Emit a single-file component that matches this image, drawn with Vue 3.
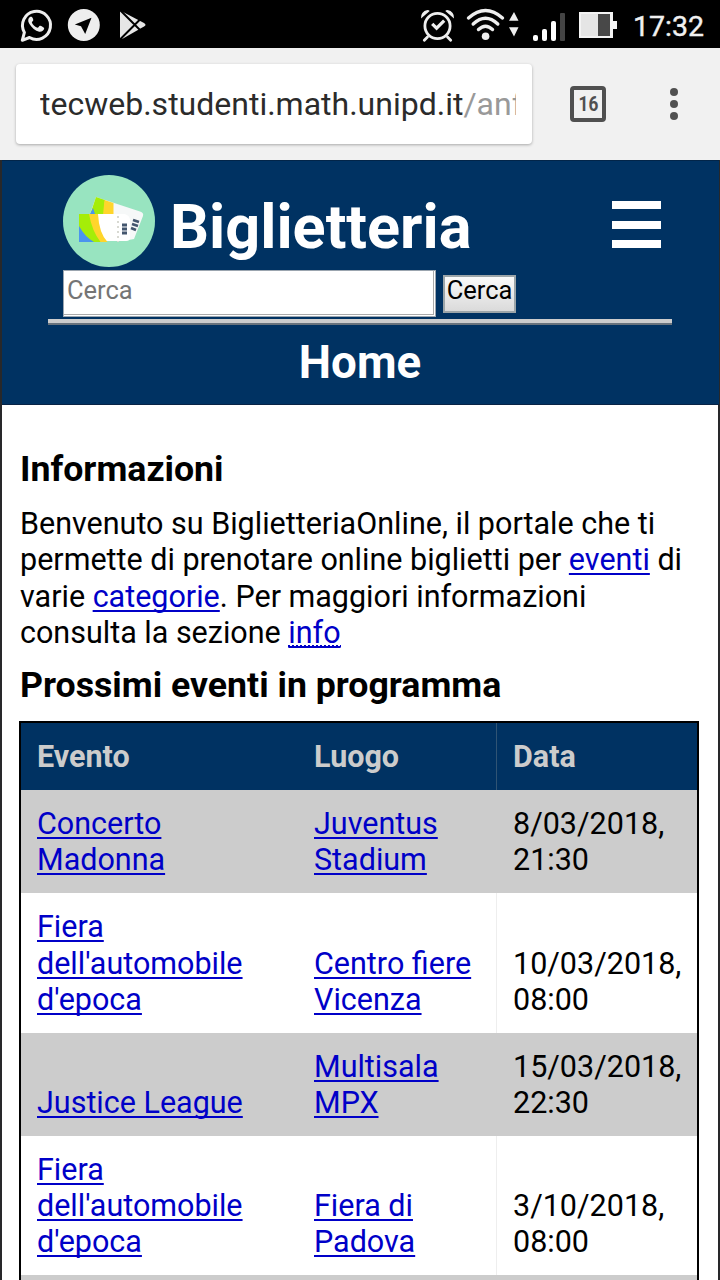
<script setup>
const events = [
  { name: ['Concerto', 'Madonna'], place: ['Juventus', 'Stadium'], date: ['8/03/2018,', '21:30'] },
  { name: ['Fiera', "dell'automobile", "d'epoca"], place: ['Centro fiere', 'Vicenza'], date: ['10/03/2018,', '08:00'] },
  { name: ['Justice League'], place: ['Multisala', 'MPX'], date: ['15/03/2018,', '22:30'] },
  { name: ['Fiera', "dell'automobile", "d'epoca"], place: ['Fiera di', 'Padova'], date: ['3/10/2018,', '08:00'] },
]
</script>

<template>
  <div class="screen">
    <div class="status">
      <svg class="status-icons" width="160" height="48" viewBox="0 0 160 48">
        <path d="M22.300 40.300 L24.400 32.400 A14 14 0 1 1 29.500 37.500 Z" fill="none" stroke="#eee" stroke-width="3" stroke-linejoin="round" />
        <path d="M30.300 16.700 c-2.400 1.400 -2.700 4.300 -1 7 c2.400 4 6 7 9.900 8 c2.400 .4 4.700 -1.300 5 -3.500 c0 -.8 -3.700 -2.800 -4.500 -2.500 c-.8 .5 -1.200 2 -2.200 2 c-2.200 -.5 -4.800 -3 -5.700 -5.200 c0 -1 1.500 -1.700 1.500 -2.600 c-.2 -1.300 -1 -3 -1.700 -3.200 Z" fill="#eee" />
        <circle cx="83.800" cy="25" r="16" fill="#eee" />
        <path d="M91.500 17.700 L74.800 24.600 L81 26.200 L85.200 34 Z" fill="#000" />
        <path d="M120 11 L123 12 L144 23 Q147 24.800 144 26.600 L123 38.500 L120 39 Z" fill="#e6e6e6" />
        <path d="M120 10 L141 31 M120 39.500 L141 18.500" stroke="#000" stroke-width="2" />
      </svg>
      <svg class="status-icons" width="210" height="48" viewBox="420 0 210 48">
        <g fill="none" stroke="#eee" stroke-width="2.800" stroke-linecap="round">
          <circle cx="437.500" cy="26" r="12.600" />
          <path d="M427.500 37 l-3.200 3.300 M447.500 37 l3.200 3.300" />
          <path d="M432.200 23.800 l4.400 4.400 l7.600 -7.600" stroke-width="3.200" stroke-linecap="butt" />
        </g>
        <path d="M421 18.500 q-.5 -7 6.500 -8.500 q1.500 0 2.200 1 Z M454 18.500 q.5 -7 -6.500 -8.500 q-1.500 0 -2.200 1 Z" fill="#eee" />
        <g fill="none" stroke="#eee" stroke-width="3.400" stroke-linecap="round">
          <path d="M468.500 18 Q485.500 3 502.500 18" />
          <path d="M473.200 24 Q485.500 12.500 497.800 24" />
          <path d="M478.500 29.500 Q485.500 23 492.500 29.500" />
        </g>
        <circle cx="485.600" cy="36.300" r="3.800" fill="#eee" />
        <path d="M509 20.800 L514 12 L518.500 20.800 Z M509 27.300 L514 36.500 L518.500 27.300 Z" fill="#eee" />
        <rect x="533" y="35" width="5" height="6" rx="2" fill="#fff" />
        <rect x="542" y="29" width="5" height="12" rx="2" fill="#fff" />
        <rect x="551" y="21" width="5" height="20" rx="2" fill="#fff" />
        <rect x="560" y="13" width="5" height="28" rx="1" fill="#444" />
        <path d="M579 12 h34 v9 h4 v8 h-4 v9 h-34 Z" fill="#f4f4f4" />
        <rect x="581" y="14" width="17" height="22" fill="#e5e5e5" />
        <rect x="598" y="14" width="12" height="22" fill="#484848" />
      </svg>
      <span class="clock">17:32</span>
    </div>

    <div class="toolbar">
      <div class="address"><div class="url">tecweb.studenti.math.unipd.it<span>/anf</span></div></div>
      <div class="tabs"><span>16</span></div>
      <div class="dots"><i></i><i></i><i></i></div>
    </div>

    <div class="page">
      <header>
        <div class="top">
          <div class="brand-row">
            <svg class="logo" width="92" height="92" viewBox="0 0 92 92">
              <circle cx="46" cy="46" r="46" fill="#98e4c0" />
              <path d="M33 22 L77 36.500 Q81 37.500 80 41 L71 64 L60 66 L27 39 Z" fill="#f6f8f8" />
              <path d="M33 22 L42 25 L41 40 H27 Z" fill="#a5ed08" />
              <path d="M41.500 25 L50.500 28 V40 H40 Z" fill="#ffd52b" />
              <path d="M30 33 L32 39 H27 Z" fill="#4b94ee" />
              <path d="M16 39 H62 Q67 41 67 45 V63 Q67 66 63 66 H16 Z" fill="#fff" />
              <path d="M16 39 H28 Q30 57 42 67 H16 Z" fill="#a5ed08" />
              <path d="M26 39 H35 Q36 58 44.500 67 H37.500 Q29 56 26 39 Z" fill="#ffd52b" />
              <path d="M16 51 Q22 62 31 67 H16 Z" fill="#4b94ee" />
              <path d="M55 41 V67" stroke="#d8d9d2" stroke-width="2" stroke-dasharray="2 3" />
              <path d="M59 49 h5 M59 53 h5 M59 57 h5" stroke="#44566e" stroke-width="2.800" transform="translate(0 1)" />
              <path d="M70 45 l6 2 M69 49 l6 2 M68 53 l5 2" stroke="#44566e" stroke-width="2.800" />
            </svg>
            <h1>Biglietteria</h1>
            <div class="burger"><i></i><i></i><i></i></div>
          </div>
          <div class="search">
            <div class="field">Cerca</div>
            <div class="button">Cerca</div>
          </div>
        </div>
        <h2>Home</h2>
      </header>

      <main>
        <h3>Informazioni</h3>
        <p>
          Benvenuto su BiglietteriaOnline, il portale che ti<br />permette di prenotare online biglietti per <a>eventi</a> di<br />varie <a>categorie</a>. Per maggiori informazioni<br />consulta la sezione <a class="abbr">info</a>
        </p>
        <h3 class="next">Prossimi eventi in programma</h3>
        <div class="table">
          <div class="row head"><div>Evento</div><div>Luogo</div><div>Data</div></div>
          <div v-for="(e, i) in events" :key="i" class="row">
            <div><a v-for="t in e.name" :key="t">{{ t }}</a></div>
            <div><a v-for="t in e.place" :key="t">{{ t }}</a></div>
            <div><span v-for="t in e.date" :key="t">{{ t }}</span></div>
          </div>
          <div class="row filler"></div>
        </div>
      </main>
    </div>
  </div>
</template>

<style>
body { overflow: hidden; background: #fff; }
</style>

<style scoped>
* { box-sizing: border-box; }
.screen { width: 720px; height: 1280px; overflow: hidden; font-family: Roboto, "Liberation Sans", sans-serif; color: #000; display: flex; flex-direction: column; }
.status { height: 48px; background: #000; display: flex; flex: none; }
.status-icons { flex: none; }
.status-icons + .status-icons { margin-left: 260px; }
.clock { margin-left: 3px; color: #f0f0f0; font-size: 28.500px; line-height: 53px; white-space: nowrap; -webkit-text-stroke: .4px #f0f0f0; }
.toolbar { height: 112px; background: #f1f1f1; display: flex; align-items: center; padding-left: 16px; flex: none; }
.address { width: 516px; height: 80px; background: #fff; border-radius: 4px; box-shadow: 0 1px 3px rgba(0, 0, 0, .3); padding: 0 16px 0 24px; display: flex; align-items: center; }
.url { font-size: 32px; line-height: 44px; color: #2b2b2b; white-space: nowrap; overflow: hidden; width: 476px; }
.url span { color: #999; }
.tabs { margin-left: 38px; width: 36px; height: 36px; border: 4px solid #505050; border-radius: 4px; display: flex; align-items: center; justify-content: center; font-size: 20px; font-weight: 700; color: #505050; }
.tabs span { transform: scaleX(.86); }
.dots { margin-left: 64px; display: flex; flex-direction: column; gap: 4px; }
.dots i { width: 8px; height: 8px; border-radius: 50%; background: #505050; }
.page { flex: 1; border-left: 2px solid #28282a; border-right: 2px solid #28282a; min-height: 0; }
header { height: 245px; background: #003262; border-top: 1px solid #022549; border-bottom: 1px solid #082345; margin-right: -1px; }
.top { width: 624px; height: 162px; margin-left: 46px; padding: 14px 0 0 15px; border-bottom: 4px solid #ccc; box-shadow: 0 2px #68727c; }
.brand-row { display: flex; height: 95px; }
h1, h2, h3, p { margin: 0; }
h1 { margin-left: 15px; width: 442px; color: #fff; font-size: 61.200px; line-height: 72px; padding-top: 16px; }
.burger { display: flex; flex-direction: column; justify-content: space-between; height: 47px; width: 49px; margin-top: 26px; }
.burger i { height: 8px; background: #fff; }
.search { display: flex; }
.field { width: 373px; height: 47px; background: #fff; border: 1px solid #9ba5af; box-shadow: inset -1px -1px #fff, inset -2px -2px #aaa; color: #757575; font-size: 25.500px; line-height: 39px; padding-left: 3px; }
.button { margin: 5px 0 0 7px; width: 73px; height: 38px; border: 2px solid #9ca5a9; background: linear-gradient(#fafafa, #dadada); color: #000; font-size: 25.500px; line-height: 26px; text-align: center; white-space: nowrap; }
h2 { color: #fff; text-align: center; font-size: 45.700px; line-height: 53px; padding-top: 13px; margin-right: 1px; }
main { padding: 44px 18px 0; }
h3 { font-size: 35.680px; line-height: 41px; }
p { font-size: 30.500px; line-height: 36.330px; padding-top: 16px; white-space: nowrap; }
a { color: #0000c8; text-decoration: underline; text-decoration-thickness: 2px; text-underline-offset: 3px; text-decoration-skip-ink: none; }
.abbr { background: repeating-linear-gradient(90deg, #0000c8 0 2px, transparent 2px 4px) 0 30px / 100% 2px no-repeat; }
.next { padding-top: 14px; }
.table { width: 680px; margin: 15px 0 0 -1px; border: 2px solid #000; font-size: 30.500px; line-height: 36.300px; }
.row { display: grid; grid-template-columns: 277px 199px 1fr; background: #fff; }
.row:nth-child(even) { background: #ccc; }
.row > div { padding: 15.200px 0 15.200px 16px; display: flex; flex-direction: column; align-items: flex-start; justify-content: flex-end; white-space: nowrap; border-right: 1px solid transparent; }
.row:nth-child(n + 3) > div { padding-top: 16px; padding-bottom: 14.400px; }
.row > div:nth-child(2) { border-right-color: #eee; }
.row:nth-child(even) > div:nth-child(2) { border-right-color: transparent; }
.row.head { background: #003262; color: #ccc; font-weight: 700; height: 67px; }
.row.head > div:nth-child(2) { border-right-color: #305474; }
.filler { height: 40px; }
</style>
